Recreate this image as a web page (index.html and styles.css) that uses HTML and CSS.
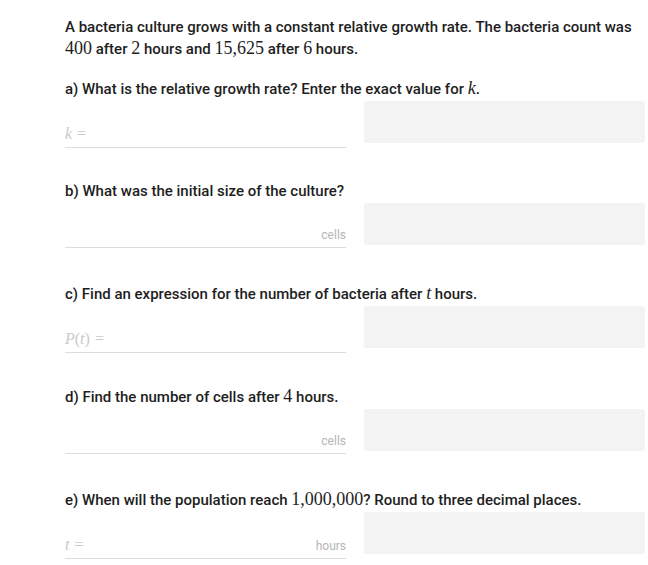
FILE: index.html
```html
<!DOCTYPE html>
<html lang="en">
<head>
<meta charset="utf-8">
<title>Bacteria growth</title>
<link rel="stylesheet" href="styles.css">
</head>
<body>
<main class="page">
  <p class="intro">A bacteria culture grows with a constant relative growth rate. The bacteria count was <span class="m">400</span> after <span class="m">2</span> hours and <span class="m">15,625</span> after <span class="m">6</span> hours.</p>

  <section class="part">
    <h2 class="q">a) What is the relative growth rate? Enter the exact value for <span class="m mi">k</span>.</h2>
    <div class="row">
      <div class="field field--math"><span class="ph"><span class="mi">k</span><span class="rel">=</span></span><span class="unit"></span></div>
      <div class="box"></div>
    </div>
  </section>

  <section class="part">
    <h2 class="q">b) What was the initial size of the culture?</h2>
    <div class="row">
      <div class="field"><span class="ph"></span><span class="unit">cells</span></div>
      <div class="box"></div>
    </div>
  </section>

  <section class="part">
    <h2 class="q">c) Find an expression for the number of bacteria after <span class="m mi">t</span> hours.</h2>
    <div class="row">
      <div class="field field--math"><span class="ph"><span class="mi">P</span>(<span class="mi">t</span>)<span class="rel">=</span></span><span class="unit"></span></div>
      <div class="box"></div>
    </div>
  </section>

  <section class="part">
    <h2 class="q">d) Find the number of cells after <span class="m">4</span> hours.</h2>
    <div class="row">
      <div class="field"><span class="ph"></span><span class="unit">cells</span></div>
      <div class="box"></div>
    </div>
  </section>

  <section class="part">
    <h2 class="q">e) When will the population reach <span class="m">1,000,000</span>? Round to three decimal places.</h2>
    <div class="row">
      <div class="field field--math"><span class="ph"><span class="mi">t</span><span class="rel">=</span></span><span class="unit">hours</span></div>
      <div class="box"></div>
    </div>
  </section>
</main>
</body>
</html>
```
FILE: styles.css
```css
* { box-sizing: border-box; }
html, body { margin: 0; padding: 0; background: #fff; }
body {
  font-family: Roboto, "Liberation Sans", sans-serif;
  color: #1e1e1e;
}
.page {
  width: 580px;
  margin-left: 65px;
  padding-top: 17px;
}
.intro, .q {
  margin: 0;
  font-size: 15px;
  font-weight: 500;
  line-height: 21px;
}
.part { margin-top: 18px; }
.part + .part { margin-top: 32px; }
.m {
  font-family: "Liberation Serif", "DejaVu Serif", serif;
  font-weight: 400;
  font-size: 18px;
}
.mi { font-style: italic; }
.row {
  display: flex;
  gap: 18px;
  margin-top: 1px;
  min-height: 48px;
  align-items: flex-start;
}
.field {
  width: 281px;
  height: 45px;
  border-bottom: 1px solid #dcdcdc;
  display: flex;
  justify-content: space-between;
  align-items: flex-end;
  padding-bottom: 4px;
}
.field--math { height: 47px; }
.ph {
  font-family: "Liberation Serif", "DejaVu Serif", serif;
  font-size: 16px;
  line-height: 18px;
  color: #c9c9c9;
}
.rel { margin: 0 4px 0 5px; }
.unit {
  font-size: 12px;
  line-height: 16px;
  color: #b5b5b5;
}
.box {
  width: 281px;
  height: 42px;
  background: #f3f3f3;
  border-radius: 3px;
}
```
